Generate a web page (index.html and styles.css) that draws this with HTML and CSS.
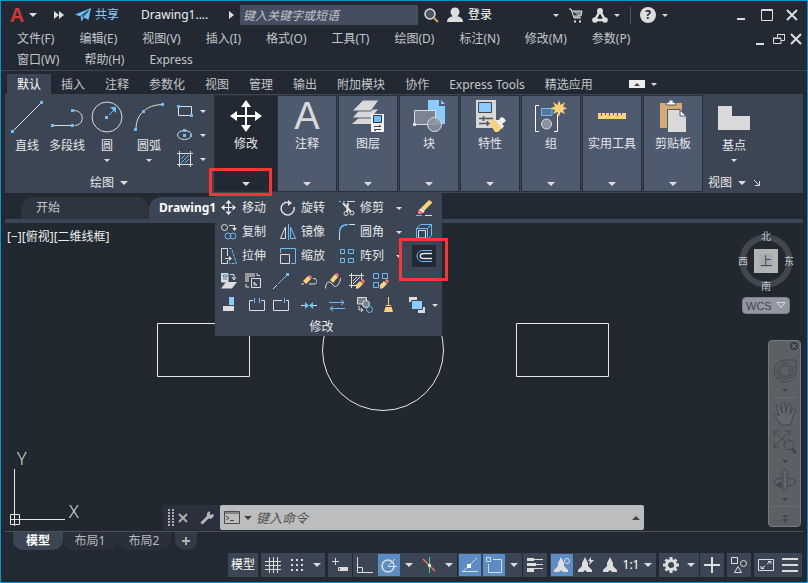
FILE: index.html
```html
<!DOCTYPE html>
<html lang="zh-CN">
<head>
<meta charset="utf-8">
<title>Drawing1</title>
<link rel="stylesheet" href="styles.css">
</head>
<body>
<div class="window">
  <header class="titlebar">
    <button class="logo" aria-label="应用程序菜单">A</button>
    <button class="drop wide" aria-label="应用程序选项"></button>
    <button class="expand" aria-label="更多工具"><svg width="10" height="8" class="solid"><path d="M0 0L5 4L0 8zM5 0L10 4L5 8z"/></svg></button>
    <button class="share"><svg width="16" height="14" viewBox="0 0 16 14"><path d="M16 0L13.500 12L9 9.500L6.500 13.500L5.500 8.500L0 6.500z" fill="#6cbcf5"/><path d="M5.500 8.500L13.500 2.500L7.500 9.500" fill="none" stroke="#222933"/></svg>共享</button>
    <span class="doc-title">Drawing1....</span>
    <form class="search">
      <svg width="5" height="8" class="solid"><path d="M0 0L5 4L0 8z"/></svg>
      <input type="text" aria-label="搜索" placeholder="键入关键字或短语">
      <button type="button" aria-label="搜索"><svg width="15" height="15"><path d="M10 10L14 14" stroke="#d8a465" stroke-width="2"/><circle cx="6" cy="6" r="5" fill="#4b5564" stroke="#ddd" stroke-width="1.500"/></svg></button>
    </form>
    <button class="login"><svg width="16" height="16" class="solid"><circle cx="8" cy="5" r="4.500"/><path d="M0 15C0 11 3 10 6 9h4c3 1 6 2 6 6z"/></svg>登录</button>
    <div class="services">
      <button class="drop" aria-label="登录选项"></button>
      <button aria-label="应用商店"><svg width="14" height="15" class="line"><path d="M0 1h2l3 9h7M3 3h10l-1 5H5" fill="#888c93"/><path d="M5 12.500h2v2H5zM10 12.500h2v2h-2z" fill="#ddd" stroke="none"/></svg></button>
      <span class="pair"><button aria-label="Autodesk"><svg width="16" height="15"><path d="M8 3L3 12H13z" fill="none" stroke="#ddd" stroke-width="2.500"/><g fill="#ddd"><circle cx="8" cy="3" r="3"/><circle cx="3" cy="12" r="2.800"/><circle cx="13" cy="12" r="2.800"/></g></svg></button>
      <button class="drop" aria-label="Autodesk 选项"></button></span>
      <span class="rule"></span>
      <span class="pair"><button class="help" aria-label="帮助">?</button>
      <button class="drop" aria-label="帮助选项"></button></span>
    </div>
    <div class="win-buttons">
      <button aria-label="最小化"><svg width="12" height="12" class="line"><path d="M1 10H9" stroke-width="2"/></svg></button>
      <button aria-label="最大化"><svg width="12" height="12" class="line"><path d="M.5 .5H11.500V11.500H.5zM0 1.500H12"/></svg></button>
      <button aria-label="关闭"><svg width="12" height="12" class="line"><path d="M1 1L11 11M11 1L1 11" stroke-width="2"/></svg></button>
    </div>
  </header>

  <nav class="menubar">
    <div class="menus">
      <button>文件(F)</button><button>编辑(E)</button><button>视图(V)</button><button>插入(I)</button><button>格式(O)</button><button>工具(T)</button><button>绘图(D)</button><button>标注(N)</button><button>修改(M)</button><button>参数(P)</button><button>窗口(W)</button><button>帮助(H)</button><button>Express</button>
    </div>
    <div class="doc-buttons">
      <button aria-label="最小化图形"><svg width="12" height="12" class="line"><path d="M0 11H8" stroke-width="2"/></svg></button>
      <button aria-label="还原图形"><svg width="12" height="12" class="line"><path d="M4.500 4V1.500H11.500V7.500H8M4 1.500H12M.5 5.500H8V10.500H.5zM0 5H8"/></svg></button>
      <button aria-label="关闭图形"><svg width="12" height="12" class="line"><path d="M1 1L11 11M11 1L1 11" stroke-width="2"/></svg></button>
    </div>
  </nav>

  <nav class="ribbon-tabs">
    <button class="active">默认</button><button>插入</button><button>注释</button><button>参数化</button><button>视图</button><button>管理</button><button>输出</button><button>附加模块</button><button>协作</button><button>Express Tools</button><button>精选应用</button>
    <span class="pair toggle"><button class="collapse" aria-label="最小化功能区"></button><button class="drop" aria-label="功能区选项"></button></span>
  </nav>

  <section class="ribbon">
    <div class="panel draw">
      <div class="tools">
        <button class="tool"><svg width="32" height="32" class="line"><path d="M3 29L29 3"/><path class="bf" d="M0 29h3v3H0zM29 0h3v3h-3z"/></svg>直线</button>
        <button class="tool"><svg width="32" height="32" class="line"><path d="M2 24.500H22M22 9.500C34 9 34 24 24 24.500"/><path class="bf" d="M0 23h3v3H0zM20 23h3v3h-3zM20 8h3v3h-3z"/></svg>多段线</button>
        <button class="tool"><svg width="32" height="32" class="line"><circle cx="16" cy="16" r="15"/><path class="b" d="M18 14L24 8"/><path class="bf" d="M14 15h3v3h-3zM25 6v6l-6-6z"/></svg>圆<i class="drop"></i></button>
        <button class="tool"><svg width="32" height="32" class="line"><path d="M3 28C3 13 14 4 29 3.500"/><path class="bf" d="M1 27h3v3H1zM9 9h3v3H9zM28 2h3v3h-3z"/></svg>圆弧<i class="drop"></i></button>
        <div class="mini">
          <button aria-label="矩形"><svg width="16" height="16" class="line"><path d="M1.500 3.500H14.500V12.500H1.500z"/><path class="bf" d="M0 2h3v3H0zM13 11h3v3h-3z"/></svg><i class="drop"></i></button>
          <button aria-label="椭圆"><svg width="16" height="16" class="line"><ellipse cx="7.500" cy="8" rx="7" ry="4.500"/><path class="bf" d="M6 2h3v3H6zM6 7h3v3H6zM13 7h2v3h-2z"/></svg><i class="drop"></i></button>
          <button aria-label="图案填充"><svg width="16" height="16" class="line"><path d="M0 2.500H16M0 13.500H16M2.500 0V16M13.500 0V16"/><path class="b" d="M4 8L8 4M4 12L12 4M8 12L12 8"/></svg><i class="drop"></i></button>
        </div>
      </div>
      <button class="panel-name">绘图<i class="drop wide"></i></button>
    </div>

    <div class="panel modify">
      <button class="tile open"><svg width="32" height="32" viewBox="0 0 32 32" fill="#fff"><path d="M15 7h2v18h-2zM7 15h18v2H7zM16 0L21 7H11zM16 32L21 25H11zM0 16L7 11V21zM32 16L25 11V21z"/></svg>修改<i class="drop wide"></i></button>
      <div class="flyout">
        <div class="commands">
          <button><svg width="16" height="16"><path d="M7 3H8V7H12V8H8V12H7V8H3V7H7zM7.500 0L10.500 3.500H4.500zM7.500 15L10.500 11.500H4.500zM0 7.500L3.500 4.500V10.500zM15 7.500L11.500 4.500V10.500z" fill="#eee"/></svg>移动</button>
          <button><svg width="16" height="16" class="line"><path d="M5 2.500A6.500 6.500 0 1 0 14 7M4 2.500H9" stroke-width="1.500"/><path d="M8 0L12 3L8 6z" fill="#ddd" stroke="none"/></svg>旋转</button>
          <button><svg width="16" height="16" class="line"><path class="b" stroke-dasharray="2" d="M0 1.500H6"/><path d="M8 1.500H16"/><path d="M4 3L12 12M9 3L8 12" stroke-width="2"/><circle cx="7" cy="13.500" r="2"/><circle cx="13" cy="13" r="2"/></svg>修剪</button>
          <button class="drop" aria-label="修剪选项"></button>
          <button class="last" aria-label="删除"><svg width="16" height="16"><path d="M5 8L13 0L16 2V3L8 11z" fill="#ffd27a"/><path d="M4 9L8 12L5 14H2V11z" fill="#ff7070"/><path d="M4 9L8 12" stroke="#fff" stroke-width="2"/><path d="M0 15.500H6" stroke="#6cbcf5"/><path d="M9 15.500H16" stroke="#ddd"/></svg></button>

          <button><svg width="16" height="16" class="line"><circle cx="3.500" cy="3.500" r="3"/><path d="M8 1.500H13.500V5"/><path d="M11 4H16L13.500 7z" fill="#ddd" stroke="none"/><circle class="b" cx="7" cy="12" r="3"/><circle class="b" cx="12" cy="12" r="3"/></svg>复制</button>
          <button><svg width="16" height="16" class="line"><path d="M.5 14.500L5.500 3V14.500z"/><path class="b" d="M10.500 3V14.500H15.500zM8.500 0V16"/></svg>镜像</button>
          <button><svg width="16" height="16" class="line"><path class="b" d="M.5 9C.5 4 3 .5 9 .5" stroke-width="1.500"/><path d="M.5 9V16M10 .5H16"/></svg>圆角</button>
          <button class="drop" aria-label="圆角选项"></button>
          <button class="last" aria-label="分解"><svg width="16" height="16" class="line"><path class="b" d="M.5 4.500H11.500V15.500H.5zM4.500 .5H15.500V11.500M.5 4.500L4.500 .5M11.500 4.500L15.500 .5M11.500 15.500L15.500 11.500"/><path d="M2.500 6.500H9.500V14H2.500z"/></svg></button>

          <button><svg width="16" height="16" class="line"><path d="M6.500 8V.5H.5V15.500H6.500V12M4 10.500H10"/><path d="M8 8L11 10.500L8 13z" fill="#ddd" stroke="none"/><path class="b" stroke-dasharray="3 1" d="M8 .5H10.500L15.500 15.500H8"/></svg>拉伸</button>
          <button><svg width="16" height="16" class="line"><path class="b" d="M.5 5V.5H15.500V15.500H11"/><path d="M.5 6.500H9.500V15.500H.5z"/></svg>缩放</button>
          <button><svg width="16" height="16" class="line"><path class="b" d="M9.500 1.500H14.500V5.500H9.500zM1.500 10.500H5.500V14.500H1.500zM9.500 10.500H14.500V14.500H9.500z"/><path class="b" d="M1.500 1.500H5.500V5.500H1.500z"/></svg>阵列</button>
          <button class="drop" aria-label="阵列选项"></button>
          <button class="last current" aria-label="偏移"><svg width="16" height="16" class="line"><path class="b" d="M16 2.500H7C-1 2.500-1 13.500 7 13.500H16"/><path d="M16 5.500H8C3 5.500 3 10.500 8 10.500H16" stroke-width="1.500"/></svg></button>
        </div>
        <div class="icons upper">
          <button aria-label="更改空间"><svg width="16" height="16" class="line"><path d="M.5 .5H7V9H.5z" fill="#ddd"/><path d="M2 2h4v2H2zM2 6h4" stroke="#4b7fae"/><path d="M9 1.500H13V6M11 4L13 7L15 4"/><path d="M5 9H16L11 15.500H0z" fill="#ddd" stroke="none"/></svg></button>
          <button aria-label="编辑长度"><svg width="16" height="16" class="line"><path d="M0 0H10V4H4V9H0z" fill="#999" stroke="none"/><path d="M6.500 5.500H15.500V14.500H6.500zM12 0V2.500H15M9 12V9L12 12zM1 11V14H4"/></svg></button>
          <button aria-label="拉长"><svg width="16" height="16" class="line"><path class="b" d="M5 11L14 2"/><path d="M0 16L4 12"/><path class="bf" d="M13 0h3v3h-3z"/></svg></button>
          <button aria-label="编辑多段线"><svg width="16" height="16" class="line"><path d="M8 11H13C17 11 17 5 12 5.500M0 11H3"/><path d="M2 8L7 3L10 6L5 11z" fill="#ffd27a" stroke="none"/><path d="M7 3L9 2L11 4L10 6z" fill="#ff7070" stroke="none"/></svg></button>
          <button aria-label="编辑样条曲线"><svg width="16" height="16" class="line"><path d="M.5 15.500C1 7 5 8 8 12S15 11 15.500 5"/><path d="M5 7L10 1L13 4L8 10z" fill="#ffd27a" stroke="none"/><path d="M10 1L12 0L14 2L13 4z" fill="#ff7070" stroke="none"/></svg></button>
          <button aria-label="编辑图案填充"><svg width="16" height="16" class="line"><path d="M0 2.500H15M0 12.500H7M2.500 0V15M12.500 0V7M4 8L8 4M4 11L11 4"/><path d="M7 12L11 8L14 11L10 15L7 16z" fill="#ffd27a" stroke="none"/><path d="M12 7L14 6L16 8L14 11z" fill="#ff7070" stroke="none"/></svg></button>
          <button aria-label="编辑阵列"><svg width="16" height="16" class="line"><path class="b" d="M.5 .5H5.500V5.500H.5zM9.500 .5H14.500V5.500H9.500zM.5 9.500H5.500V14.500H.5z"/><path d="M7 12L11 8L14 11L10 15L7 16z" fill="#ffd27a" stroke="none"/><path d="M12 7L14 6L16 8L14 11z" fill="#ff7070" stroke="none"/></svg></button>
        </div>
        <div class="icons lower">
          <button aria-label="对齐"><svg width="16" height="16"><path d="M8 0h5v8H8z" fill="#8accff"/><path d="M2 9h11v5H2z" fill="#ddd"/></svg></button>
          <button aria-label="打断"><svg width="16" height="16" class="line"><path d="M4 3.500H.5V13.500H15.500V3.500H12"/><path class="b" d="M5.500 1V6M10.500 1V6"/></svg></button>
          <button aria-label="打断于点"><svg width="16" height="16" class="line"><path d="M9 3.500H.5V13.500H15.500V3.500H13"/><path class="b" d="M11.500 1V6"/></svg></button>
          <button aria-label="合并"><svg width="16" height="16" class="line"><path d="M0 8.500H4M12 8.500H16"/><path class="bf" d="M4 5L8 8.500L4 12zM12 5L8 8.500L12 12z"/></svg></button>
          <button aria-label="反转"><svg width="16" height="16" class="line"><path class="b" d="M0 5.500H15M12 3L15 5.500L12 8"/><path class="b" d="M1 11.500H16M4 9L1 11.500L4 14"/></svg></button>
          <button aria-label="复制嵌套对象"><svg width="16" height="16" class="line"><path d="M.5 .5H9.500V7H.5z" fill="#777f8b"/><circle cx="9" cy="7" r="3.500" fill="#777f8b"/><path d="M2 9V13H6M4 11L6 13L4 15"/><circle class="b" cx="12.500" cy="12.500" r="3"/></svg></button>
          <button aria-label="删除重复对象"><svg width="16" height="16"><path d="M7 0h1v8h2l2 7H3l2-7h2z" fill="#ffd27a"/><path d="M4 9.500H11" stroke="#3c4553"/></svg></button>
          <button aria-label="绘图次序"><svg width="16" height="16"><path d="M0 0h8v5H0zM9 10h7v6H9z" fill="#ddd"/><path d="M2.500 3.500h11v9h-11z" fill="#8accff" stroke="#3c4553"/></svg></button>
          <button class="drop" aria-label="绘图次序选项"></button>
        </div>
        <div class="flyout-name">修改</div>
      </div>
    </div>

    <div class="tiles">
      <button class="tile"><span class="letter">A</span>注释<i class="drop wide"></i></button>
      <button class="tile"><svg width="32" height="32"><g fill="#d9d9d9"><path d="M8 17H27L19 24H0z"/><path d="M8 9H27L19 18H0z" stroke="#4e5a6e"/><path d="M11 0H27L19 11H0z" stroke="#4e5a6e"/></g><path d="M19 14h13v18H19z" fill="#f2f2f2"/><path d="M21.500 15.500h8v7h-8z" fill="#6cc0ff" stroke="#333"/><path d="M22 26.500h7M27 25l2 1.500M29 29.500h-7M24 31l-2-1.500" stroke="#444"/></svg>图层<i class="drop wide"></i></button>
      <button class="tile"><svg width="32" height="32"><path d="M15 0H26V6H32V24H15z" fill="#8accff"/><path d="M28 0L32 4H28z" fill="#8accff"/><path d="M1.500 10.500H22.500V24.500H1.500z" fill="#7b8491" stroke="#ddd"/><circle cx="21.500" cy="24.500" r="7" fill="#8c939e" fill-opacity=".8" stroke="#ddd"/><path d="M0 23h3v3H0z" fill="#ddd"/></svg>块<i class="drop wide"></i></button>
      <button class="tile"><svg width="32" height="32"><path d="M2 0H22V28H2z" fill="#d9d9d9"/><path d="M4.500 2.500H17.500V12.500H4.500z" fill="#8accff" stroke="#444"/><path d="M5 18.500H19M5 23.500H16M9.500 16V21M13.500 21V26" stroke="#555" stroke-width="1.500"/><path d="M15 22L20 19L28 28L24 32H21z" fill="#ffd27a"/><path d="M21 20L25 20L27 17L30 18L32 21L28 24L30 26L28 29z" fill="#eee"/></svg>特性<i class="drop wide"></i></button>
      <button class="tile"><svg width="32" height="32"><path d="M4 5.500H.5V31.500H4M19 31.500H22.500V14" fill="none" stroke="#fff"/><path d="M6.500 8.500H17V15.500H6.500z" fill="#50799d" stroke="#6cbcf5"/><circle cx="11.500" cy="24" r="5" fill="#8c939e" stroke="#ddd"/><path d="M24 0L25.500 5L30 2L28 6.500L32 8.500L28 10L30 14L25.500 12L24 17L22.500 12L18 14L20 10L15 8.500L20 6.500L18 2L22.500 5z" fill="#ffd27a"/></svg>组<i class="drop wide"></i></button>
      <button class="tile"><svg width="32" height="32"><path d="M2 13H30V19H2z" fill="#ffd27a"/><path d="M5.500 13V16M9.500 13V15M13.500 13V16M17.500 13V15M21.500 13V16M25.500 13V15" stroke="#4e5a6e"/></svg>实用工具<i class="drop wide"></i></button>
      <button class="tile"><svg width="32" height="32"><path d="M3 3H25V28H3z" fill="#d8a974"/><path d="M9 5V3L12 2V0H16V2L19 3V5z" fill="#fff" stroke="#4e5a6e"/><path d="M10.500 9.500H23L29.500 16V32.500H10.500z" fill="#d9d9d9" stroke="#4e5a6e"/><path d="M23 10V16H29z" fill="#fff" stroke="#4e5a6e"/></svg>剪贴板<i class="drop wide"></i></button>
    </div>

    <div class="panel view">
      <button class="tool"><svg width="32" height="32"><path d="M0 5H14V15H32V29H0z" fill="#d9d9d9"/></svg>基点<i class="drop"></i></button>
      <div class="view-name"><button class="panel-name">视图<i class="drop wide"></i></button><button aria-label="视图对话框"><svg width="6" height="6" class="line"><path d="M0 0L5 5M5.500 1V5.500H1"/></svg></button></div>
    </div>
  </section>

  <nav class="doc-tabs"><button>开始</button><button class="active">Drawing1*</button></nav>

  <main class="canvas">
    <p class="view-label">[−][俯视][二维线框]</p>
    <svg class="drawing" width="620" height="200" fill="none" stroke="#e8e8e8"><path d="M152.500 100.500H244.500V153.500H152.500zM511.500 100.500H603.500V153.500H511.500z"/><circle cx="378" cy="127" r="60.500"/></svg>

    <div class="cube">
      <div class="compass"><span class="north">北</span><span class="west">西</span><button class="face">上</button><span class="east">东</span><span class="south">南</span></div>
      <button class="wcs">WCS<svg width="10" height="7" fill="none" stroke="#dadce6"><path d="M1 .5H9L5 5.500z"/></svg></button>
    </div>

    <div class="navbar">
      <button class="nav-close" aria-label="关闭导航栏"><svg width="8" height="8"><circle cx="4" cy="4" r="4" fill="#3a3f45"/><path d="M2 2L6 6M6 2L2 6" stroke="#777b80"/></svg></button>
      <button aria-label="控制盘"><svg width="24" height="24" class="nav"><path d="M12 1H23V12A11 11 0 1 1 12 1z"/><circle cx="12" cy="12" r="8"/><circle cx="12" cy="12" r="5.500"/><path d="M8 16L5 19M16 16L19 19"/></svg></button><i class="drop"></i>
      <button class="split" aria-label="平移"><svg width="24" height="24" class="nav"><path d="M8 23C6 18 2 15 1 13C1 11 3 11 6 14L3 4C4 2 6 3 7 5L9 11V2C10 0 12 0 12 2L13 11L15 3C16 1 18 2 18 4L17 12L20 6C21 5 23 6 22 8L19 18L17 23z" fill="#62676f"/></svg></button>
      <button aria-label="缩放"><svg width="24" height="24" class="nav"><path d="M1 1L15 15M17 1L1 17M1 6V1H6M12 1H17V6M1 12V17H6"/><circle cx="16" cy="15" r="5" fill="#5b6064"/><path d="M19 19L23 23" stroke-width="3"/></svg></button><i class="drop"></i>
      <button aria-label="动态观察"><svg width="24" height="24" class="nav"><ellipse cx="12" cy="14" rx="11" ry="4"/><path d="M10 22V6H8L12 1L16 6H14V22z" fill="#62676f"/><path d="M8 14L3 17L8 20z" fill="#42474e"/></svg></button><i class="drop"></i>
      <button class="split more" aria-label="自定义"><svg width="8" height="8"><path d="M1 0H7L4 3zM1 4H7L4 8z" fill="#42474e"/></svg></button>
    </div>

    <svg class="ucs" width="90" height="90" fill="none" stroke="#e8e8e8"><path d="M9.500 28V85M6 78.500H60M5.500 73.500H14.500V83.500H5.500z"/><g fill="#e8e8e8" stroke="none"><text x="12" y="24">Y</text><text x="64" y="77">X</text></g></svg>

    <div class="command">
      <div class="grip"><svg width="6" height="17"><path d="M1 0V17M5 0V17" stroke="#aaadb2" stroke-width="2" stroke-dasharray="2 1"/></svg>
      <button aria-label="关闭命令行"><svg width="10" height="10"><path d="M1 1L9 9M9 1L1 9" stroke="#aaadb2" stroke-width="2"/></svg></button>
      <button class="wrench" aria-label="命令行设置"><svg width="14" height="14"><path d="M1.500 12.500L8 6" stroke="#b4b6ba" stroke-width="3"/><path d="M7 7V2L10 0V4L13 3L14 5L11 8z" fill="#b4b6ba"/></svg></button></div>
      <label class="prompt"><svg width="16" height="13" fill="none" stroke="#4a4a4a"><path d="M.5 .5H15.500V12.500H.5zM0 2H16M2 5L5 7L2 9M6 9.500H10"/></svg><i class="drop wide"></i><input type="text" placeholder="键入命令" aria-label="命令"><i class="rise"></i></label>
    </div>
  </main>

  <nav class="layout-tabs"><button class="active">模型</button><button>布局1</button><button>布局2</button><button class="add" aria-label="新建布局"><svg width="8" height="8"><path d="M4 0V8M0 4H8" stroke="#aeb1b6" stroke-width="2"/></svg></button></nav>

  <footer class="status">
    <div class="cluster"><button class="space">模型</button></div>
    <div class="cluster"><span class="set"><button aria-label="栅格"><svg width="16" height="16" class="line"><path d="M4.500 0V16M8.500 0V16M12.500 0V16M0 4.500H16M0 8.500H16M0 12.500H16"/></svg></button><button aria-label="捕捉"><svg width="14" height="14" class="line"><path stroke-width="2" stroke-dasharray="2 3" d="M1 2H14M1 7H14M1 12H14"/></svg></button><button class="drop wide" aria-label="捕捉选项"></button></span></div>
    <div class="cluster">
      <span class="set"><button aria-label="动态输入"><svg width="16" height="16" class="line"><path d="M0 4.500H7M3.500 1V8M6.500 10.500H15.500V13.500H6.500z"/><path d="M8 10h8v4H8z" fill="#ddd" stroke="none"/></svg></button></span>
      <span class="set"><button aria-label="正交"><svg width="16" height="16" class="line"><path d="M.5 0V15.500H16M.5 10.500H5.500V15.500"/></svg></button><button class="on" aria-label="极轴追踪"><svg width="16" height="16" class="line"><circle cx="7" cy="9" r="6" stroke-width="1.500"/><path d="M7 9.500H16M7 9L14 2"/></svg></button><button class="drop wide" aria-label="极轴选项"></button><button aria-label="等轴测草图"><svg width="16" height="16"><path d="M2 2L14 14" stroke="#f07070" stroke-width="1.500"/><path d="M8.500 0V16" stroke="#48d880"/><path d="M7 7h3v3H7z" fill="#ddd"/></svg></button><button class="drop wide" aria-label="等轴测选项"></button></span>
      <span class="set"><button class="on" aria-label="对象捕捉追踪"><svg width="16" height="16" class="line"><path d="M1 14.500L15 1M0 14.500H16"/><path d="M5 7h4v4H5z" fill="#fff" stroke="none"/></svg></button><button class="on" aria-label="对象捕捉"><svg width="16" height="16" class="line"><path d="M7 2.500H15.500V15.500H2.500V7M.5 .5H4.500V4.500H.5z"/></svg></button><button class="drop wide" aria-label="对象捕捉选项"></button></span>
      <span class="set"><button aria-label="线宽"><svg width="16" height="16" class="line"><path d="M0 2.500H16M0 7.500H16M0 11.500H16"/><path stroke-width="3" d="M0 2.500H7M0 7.500H9M0 13.500H7"/></svg></button></span>
    </div>
    <div class="cluster"><span class="set"><button class="on" aria-label="注释可见性"><svg width="16" height="16" class="solid"><path d="M7 0L10 6V9L14 13V15H9L7 13L5 15H0V13L4 9V6z"/><circle cx="13" cy="4" r="2.500" fill="#5b8cc4" stroke="#ddd"/></svg></button><button aria-label="自动缩放"><svg width="16" height="16" class="solid"><path d="M7 0L10 6V9L14 13V15H9L7 13L5 15H0V13L4 9V6zM13 0L10 4H12L11 8L16 3H13z"/></svg></button><button aria-label="注释比例"><svg width="16" height="16" class="solid"><path d="M8 0L11 6V9L15 13V15H10L8 13L6 15H1V13L5 9V6z"/></svg></button><button class="scale">1:1</button><button class="drop wide" aria-label="比例选项"></button></span></div>
    <div class="cluster"><span class="set"><button aria-label="切换工作空间"><svg width="16" height="16"><path d="M8 0V16M0 8H16M2.500 2.500L13.500 13.500M13.500 2.500L2.500 13.500" stroke="#ddd" stroke-width="3"/><circle cx="8" cy="8" r="4.500" fill="#3c4553" stroke="#ddd" stroke-width="3"/></svg></button><button class="drop wide" aria-label="工作空间选项"></button></span><span class="set"><button aria-label="注释监视器"><svg width="16" height="16" class="line"><path stroke-width="2" d="M8 0V16M0 8H16"/></svg></button></span></div>
    <div class="cluster"><span class="set"><button aria-label="隔离对象"><svg width="16" height="16" class="line"><path d="M.5 .5H6.500V6.500H.5zM3.500 15.500L7 9.500L10.500 15.500z"/><circle cx="12.500" cy="6.500" r="3"/></svg></button></span></div>
    <div class="cluster"><span class="set"><button aria-label="全屏显示"><svg width="16" height="16" class="line"><path d="M.5 2.500H15.500V13.500H.5zM9 7L12 5M7 9L4 11M10 4.500H13V7M3 9V11.500H6"/></svg></button><button aria-label="自定义"><svg width="16" height="16" class="line"><path stroke-width="2" d="M0 2H16M0 8H16M0 14H16"/></svg></button></span></div>
  </footer>

  <div class="mark mark-panel"></div>
  <div class="mark mark-offset"></div>
</div>
</body>
</html>
```
FILE: styles.css
```css
* { box-sizing: border-box; }

body {
  margin: 0;
  background: #222933;
  color: #c3c6ca;
  font: 12px/16px "Noto Sans", "Noto Sans CJK SC", sans-serif;
}

button, input {
  margin: 0;
  padding: 0;
  border: 0;
  background: none;
  color: inherit;
  font: inherit;
  white-space: nowrap;
}

svg { display: block; flex: none; }
.line { fill: none; stroke: #ddd; }
.solid { fill: #ddd; }
.b { stroke: #6cbcf5; }
.bf { fill: #6cbcf5; stroke: none; }
.nav { fill: none; stroke: #42474e; }

.window {
  position: relative;
  display: flex;
  flex-direction: column;
  min-height: 100vh;
  border: 1px solid #0696d7;
}

.drop {
  display: flex;
  flex: none;
  align-items: center;
  justify-content: center;
  width: 8px;
}
.drop::before {
  content: "";
  border: 3px solid transparent;
  border-top-color: #ddd;
  border-bottom: 0;
}
.drop.wide::before { border-width: 4px 4px 0; }
.pair { display: flex; align-items: center; gap: 5px; }

/* title bar */
.titlebar {
  display: flex;
  align-items: center;
  height: 28px;
  padding-left: 8px;
}
.logo { width: 16px; color: #cf3a34; font: bold 20px/24px "Liberation Sans", sans-serif; }
.titlebar > .drop { margin-left: 4px; }
.expand { margin-left: 17px; }
.share { display: flex; align-items: center; gap: 4px; margin-left: 11px; color: #8ccaf8; }
.doc-title { width: 88px; margin-left: 22px; color: #eee; }
.search { display: flex; align-items: center; gap: 6px; }
.search input {
  width: 178px;
  height: 20px;
  padding-left: 3px;
  background: #454e60;
  font-style: italic;
}
input::placeholder { color: inherit; opacity: 1; }
.login { display: flex; align-items: center; gap: 5px; margin-left: 8px; color: #fff; }
.services { display: flex; align-items: center; gap: 9px; margin-left: auto; }
.rule { width: 1px; height: 18px; background: #4a5364; }
.help {
  width: 16px;
  height: 16px;
  border-radius: 50%;
  background: #ddd;
  color: #222933;
  font-weight: bold;
}
.win-buttons { display: flex; gap: 13px; margin: 0 9px 0 67px; }

/* menu bar */
.menubar {
  display: flex;
  justify-content: space-between;
  padding: 0 5px 0 16px;
  border-bottom: 1px solid #3c4553;
}
.menus { display: flex; flex-wrap: wrap; gap: 1px 25px; max-width: 640px; line-height: 20px; }
.doc-buttons { display: flex; gap: 5px; padding-top: 3px; height: 16px; }

/* ribbon tabs */
.ribbon-tabs { display: flex; align-items: flex-end; height: 23px; padding-left: 6px; }
.ribbon-tabs > button { height: 20px; padding: 1px 10px 0; }
.ribbon-tabs .active { background: #3c4553; color: #fff; }
.toggle { height: 20px; margin-left: 26px; }
.collapse {
  display: flex;
  align-items: center;
  justify-content: center;
  width: 16px;
  height: 8px;
  background: #eee;
}
.collapse::before, .rise {
  content: "";
  border: 3px solid transparent;
  border-bottom-color: #444;
  border-top: 0;
}
.rise { border-width: 0 4px 4px; }

/* ribbon */
.ribbon {
  display: flex;
  height: 99px;
  margin: 0 4px;
  padding: 2px 0;
  background: #3c4553;
  color: #e6e7e9;
}
.panel { display: flex; flex-direction: column; justify-content: space-between; }
.draw { width: 210px; align-items: center; }
.tools { display: grid; grid-template-columns: 44px 36px 44px 40px 46px; padding-top: 5px; }
.tool {
  display: flex;
  flex-direction: column;
  align-items: center;
  gap: 5px;
}
.tool .drop { height: 2px; }
.mini { display: flex; flex-direction: column; gap: 8px; padding: 2px 0 0 8px; }
.mini button { display: flex; gap: 6px; }
.panel-name { display: flex; gap: 4px; }
.panel-name .drop { width: 12px; }

.modify { position: relative; width: 62px; }
.tile {
  display: flex;
  flex-direction: column;
  align-items: center;
  gap: 4px;
  width: 58px;
  height: 95px;
  padding: 4px 0 5px;
  background: #4e5a6e;
  box-shadow: 0 0 0 1px #29303b;
}
.tile .drop { height: 4px; margin-top: auto; }
.tile.open { width: 62px; background: #222933; }
.tiles { display: flex; gap: 3px; padding-left: 1px; }
.letter { height: 32px; color: #d9d9d9; font: 38px/32px "Liberation Sans", sans-serif; }

.view { align-items: flex-start; padding: 5px 0 0 6px; }
.view .tool { padding-left: 10px; }
.view-name { display: flex; align-items: center; gap: 6px; }

/* modify flyout */
.flyout {
  position: absolute;
  z-index: 2;
  top: 96px;
  left: 0;
  width: 227px;
  padding: 4px 0 0 6px;
  background: #3c4553;
}
.commands {
  display: grid;
  grid-template-columns: 59px 59px 54px 19px 24px;
  grid-auto-rows: 24px;
  align-items: center;
}
.commands button { display: flex; align-items: center; gap: 5px; }
.commands .drop { width: 12px; height: 24px; }
.commands .last { justify-content: center; width: 24px; height: 22px; }
.commands .current { background: #222933; }
.icons { display: grid; grid-auto-rows: 16px; padding-top: 5px; }
.icons + .icons { padding-top: 8px; }
.upper { grid-template-columns: 24px 28px 28px 24px 24px 24px 16px; }
.lower { grid-template-columns: 28px 24px 28px 28px 28px 24px 28px 16px 16px; }
.lower .drop { width: 20px; }
.flyout-name { padding: 6px 20px 1px 0; text-align: center; }

/* document tabs */
.doc-tabs {
  display: flex;
  align-items: flex-end;
  height: 30px;
  margin: 0 4px;
  padding-left: 16px;
  border-bottom: 4px solid #3c4553;
}
.doc-tabs button {
  width: 128px;
  height: 22px;
  padding-left: 15px;
  border-radius: 12px 12px 0 0;
  background: #2e3541;
  text-align: left;
}
.doc-tabs .active { background: #3c4553; color: #fff; font-weight: bold; padding-left: 10px; }

/* drawing area */
.canvas { position: relative; flex: 1; margin: 0 4px; border-bottom: 1px solid #4a505a; background: #212830; }
.view-label { margin: 0; padding: 6px 2px; color: #eee; }
.drawing { position: absolute; top: 0; left: 0; }
.ucs { position: absolute; bottom: 0; left: 0; font-size: 18px; font-family: "Open Sans", sans-serif; font-weight: 300; }

.cube { position: absolute; top: 6px; right: 7px; width: 60px; display: flex; flex-direction: column; align-items: center; gap: 4px; }
.compass {
  display: grid;
  grid-template: "n n n" 14px "w c e" 36px "s s s" 14px / 14px 32px 14px;
  place-items: center;
  font: 10px/12px "Noto Sans CJK SC", sans-serif;
  background: radial-gradient(circle, transparent 20px, #42474f 21px 26px, transparent 27px);
}
.north { grid-area: n; }
.west { grid-area: w; }
.east { grid-area: e; }
.south { grid-area: s; }
.face { grid-area: c; width: 24px; height: 24px; border: 5px solid #b4b4b4; background: #a5acb2; color: #3f474f; font-size: 12px; }
.wcs {
  display: flex;
  align-items: center;
  justify-content: space-between;
  width: 48px;
  height: 17px;
  padding: 0 3px;
  border: 1px solid #7d808c;
  border-radius: 4px;
  background: #9496a4;
  color: #43464e;
  font: 11px/14px "Liberation Sans", sans-serif;
}

.navbar {
  position: absolute;
  right: 2px;
  bottom: 4px;
  display: flex;
  flex-direction: column;
  align-items: center;
  gap: 4px;
  width: 33px;
  height: 187px;
  padding: 1px 2px 4px;
  border: 1px solid #747a7d;
  border-radius: 4px;
  background: #5b6064;
}
.navbar .drop { height: 6px; }
.navbar .drop::before { border-top-color: #3d4248; }
.nav-close { align-self: flex-end; margin-bottom: 5px; }
.split { padding-top: 4px; border-top: 1px solid #686d71; }
.more { width: 100%; display: flex; justify-content: center; padding-top: 8px; }

.command { position: absolute; left: 158px; right: 159px; bottom: 1px; display: flex; height: 25px; }
.grip { display: flex; align-items: center; gap: 4px; width: 57px; padding: 0 6px 0 5px; background: #2a303c; }
.wrench { margin-left: auto; }
.prompt { display: flex; flex: 1; align-items: center; padding: 0 4px; border-radius: 2px; background: #bcbdbf; color: #505050; }
.prompt .drop { width: 16px; }
.prompt .drop::before { border-top-color: #444; }
.prompt input { flex: 1; min-width: 0; font-style: italic; font-size: 13px; }

/* layout tabs */
.layout-tabs { display: flex; height: 18px; padding-left: 12px; }
.layout-tabs button { width: 54px; border-radius: 0 0 10px 10px; background: #2a303b; color: #b6b9be; }
.layout-tabs .active { width: 50px; background: #3c4553; color: #fff; font-weight: bold; }
.layout-tabs .add { display: flex; align-items: center; justify-content: center; width: 22px; margin-left: 4px; background: #333b48; }

/* status bar */
.status { display: flex; justify-content: flex-end; gap: 3px; padding: 3px 5px 5px; }
.cluster { display: flex; gap: 1px; }
.set { display: flex; background: #3c4553; }
.status button { display: flex; align-items: center; justify-content: center; width: 24px; height: 24px; color: #fff; }
.status .drop { width: 16px; }
.status .on { background: #5b8cc4; background-clip: content-box; padding: 1px; }
.status .space { width: 30px; background: #3c4553; }
.status .scale { width: 18px; }

/* callouts */
.mark { position: absolute; z-index: 3; border: 3px solid #fc3434; pointer-events: none; }
.mark-panel { top: 167px; left: 208px; width: 63px; height: 28px; }
.mark-offset { top: 237px; left: 398px; width: 49px; height: 43px; }
```
